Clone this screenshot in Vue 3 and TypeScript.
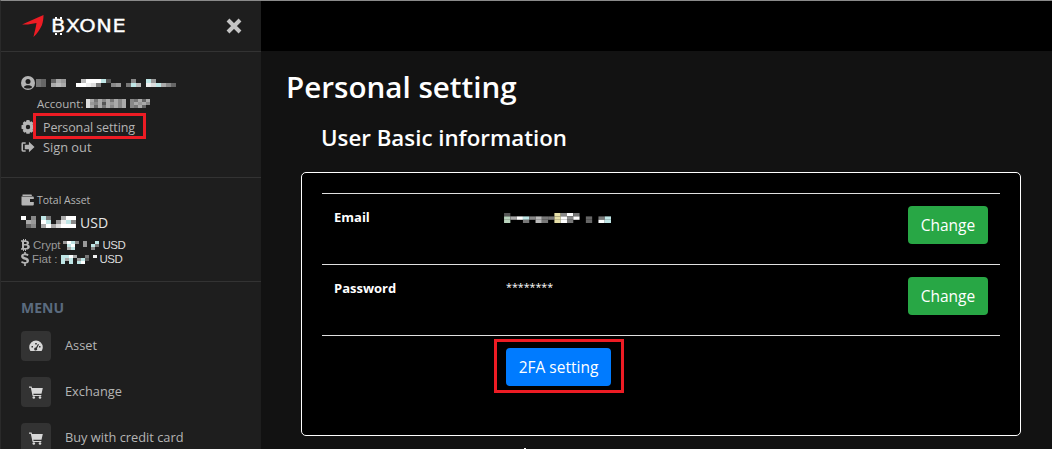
<template>
  <div class="page">
    <aside class="sidebar">
      <div class="brand">
        <svg class="logo" width="24" height="26" viewBox="0 0 24 26">
          <path d="M1 10.500 L22.500 1 C22.500 4 22 8 21 11 C19 15.500 16 20 12.500 23 C13.500 18 15 13 15.500 9 L7 10.500 Z" fill="#ed1c24" />
        </svg>
        <span class="brand-name"><span class="brand-b">B</span>XONE</span>
        <svg class="close" width="16" height="16" viewBox="0 0 16 16">
          <path d="M2 2 L14 14 M14 2 L2 14" stroke="#c4c4c4" stroke-width="4" />
        </svg>
      </div>

      <section class="user">
        <div class="user-line">
          <svg class="ico" width="14" height="14" viewBox="0 0 14 14">
            <circle cx="7" cy="7" r="7" fill="#b5b5b5" />
            <circle cx="7" cy="5.500" r="2.500" fill="#1e1e1e" />
            <path d="M2.800 11.200 C4 8.700 10 8.700 11.200 11.200 C9.500 13 4.500 13 2.800 11.200 Z" fill="#1e1e1e" />
          </svg>
          <svg class="blur" :width="blocks.name.w" :height="blocks.name.h" :viewBox="`0 0 ${blocks.name.w} ${blocks.name.h}`">
            <rect v-for="(b, i) in blocks.name.cells" :key="i" :x="b[0]" :y="b[1]" :width="b[2]" :height="b[3]" :fill="b[4]" />
          </svg>
        </div>
        <div class="account">
          Account:
          <svg class="blur" :width="blocks.account.w" :height="blocks.account.h" :viewBox="`0 0 ${blocks.account.w} ${blocks.account.h}`">
            <rect v-for="(b, i) in blocks.account.cells" :key="i" :x="b[0]" :y="b[1]" :width="b[2]" :height="b[3]" :fill="b[4]" />
          </svg>
        </div>
        <div class="user-link first">
          <svg class="ico" width="14" height="14" viewBox="0 0 14 14">
            <path d="M7 0 L8.600 0.300 L9 2 L10.500 1.300 L12.300 3 L11.600 4.500 L13.500 5.200 L13.500 8.800 L11.600 9.500 L12.300 11 L10.500 12.700 L9 12 L8.600 13.700 L5.400 13.700 L5 12 L3.500 12.700 L1.700 11 L2.400 9.500 L0.500 8.800 L0.500 5.200 L2.400 4.500 L1.700 3 L3.500 1.300 L5 2 L5.400 0.300 Z M7 4.800 A2.200 2.200 0 1 0 7 9.200 A2.200 2.200 0 1 0 7 4.800 Z" fill="#b5b5b5" fill-rule="evenodd" />
          </svg>
          <span class="marked">Personal setting</span>
        </div>
        <div class="user-link">
          <svg class="ico" width="14" height="12" viewBox="0 0 15 12">
            <path d="M5 1 L2 1 Q0.500 1 0.500 2.500 L0.500 9.500 Q0.500 11 2 11 L5 11 L5 9.500 L2.200 9.500 L2.200 2.500 L5 2.500 Z" fill="#b5b5b5" />
            <path d="M8.500 0.500 L14.500 6 L8.500 11.500 L8.500 8.300 L4 8.300 L4 3.700 L8.500 3.700 Z" fill="#b5b5b5" />
          </svg>
          <span>Sign out</span>
        </div>
      </section>

      <section class="assets">
        <div class="asset-title">
          <svg class="ico" width="13" height="12" viewBox="0 0 13 12">
            <path d="M1.500 0.500 L10.500 0.500 L11 2 L1.500 2 Z M0.500 2.500 L12 2.500 Q12.800 2.500 12.800 3.300 L12.800 5 L9 5 L9 8 L12.800 8 L12.800 10.500 Q12.800 11.500 11.800 11.500 L1.500 11.500 Q0.500 11.500 0.500 10.500 Z" fill="#b5b5b5" />
          </svg>
          Total Asset
        </div>
        <div class="asset-total">
          <svg class="blur" :width="blocks.total.w" :height="blocks.total.h" :viewBox="`0 0 ${blocks.total.w} ${blocks.total.h}`">
            <rect v-for="(b, i) in blocks.total.cells" :key="i" :x="b[0]" :y="b[1]" :width="b[2]" :height="b[3]" :fill="b[4]" />
          </svg>
          USD
        </div>
        <div class="asset-line">
          <svg class="cur-ico" width="9" height="12" viewBox="0 0 9 12">
            <path d="M2 0 L3 0 L3 1.300 L4 1.300 L4 0 L5 0 L5 1.400 C7 1.600 8 2.500 8 3.700 C8 4.700 7.500 5.300 6.700 5.600 C8 5.900 8.800 6.800 8.800 8 C8.800 9.600 7.500 10.500 5 10.600 L5 12 L4 12 L4 10.700 L3 10.700 L3 12 L2 12 L2 10.700 L0 10.700 L0 9.300 L1 9.300 L1 2.700 L0 2.700 L0 1.300 L2 1.300 Z M3 3 L3 5 L5 5 C6 5 6 3 5 3 Z M3 6.600 L3 9 L5.300 9 C6.700 9 6.700 6.600 5.300 6.600 Z" fill="#b5b5b5" fill-rule="evenodd" />
          </svg>
          <span class="muted">Crypt</span>
          <svg class="blur" :width="blocks.crypt.w" :height="blocks.crypt.h" :viewBox="`0 0 ${blocks.crypt.w} ${blocks.crypt.h}`">
            <rect v-for="(b, i) in blocks.crypt.cells" :key="i" :x="b[0]" :y="b[1]" :width="b[2]" :height="b[3]" :fill="b[4]" />
          </svg>
          USD
        </div>
        <div class="asset-line">
          <svg class="cur-ico" width="8" height="14" viewBox="0 0 8 14">
            <path d="M3.200 0 L4.800 0 L4.800 1.500 C6 1.600 7 2 7.600 2.500 L6.800 4 C6 3.500 5 3.200 4 3.200 C2.800 3.200 2.400 3.600 2.400 4.100 C2.400 5.600 8 5 8 8.800 C8 10.300 6.800 11.400 4.800 11.600 L4.800 14 L3.200 14 L3.200 11.700 C2 11.600 0.800 11.200 0 10.500 L0.900 9 C1.800 9.700 2.900 10 4 10 C5.100 10 5.600 9.600 5.600 9 C5.600 7.400 0.100 8 0.100 4.300 C0.100 2.800 1.200 1.700 3.200 1.500 Z" fill="#b5b5b5" />
          </svg>
          <span class="muted">Fiat :</span>
          <svg class="blur" :width="blocks.fiat.w" :height="blocks.fiat.h" :viewBox="`0 0 ${blocks.fiat.w} ${blocks.fiat.h}`">
            <rect v-for="(b, i) in blocks.fiat.cells" :key="i" :x="b[0]" :y="b[1]" :width="b[2]" :height="b[3]" :fill="b[4]" />
          </svg>
          USD
        </div>
      </section>

      <section class="menu">
        <h4>MENU</h4>
        <div v-for="item in menu" :key="item.label" class="menu-item">
          <span class="menu-icon">
            <svg v-if="item.icon === 'gauge'" width="14" height="12" viewBox="0 0 14 12">
              <path d="M7 0.500 A6.800 6.800 0 0 0 0.200 7.300 Q0.200 9.500 1.400 11 L12.600 11 Q13.800 9.500 13.800 7.300 A6.800 6.800 0 0 0 7 0.500 Z M6.200 3 L7.800 3 L7.800 4.500 L6.200 4.500 Z M2.500 6 L4 6 L4 7.500 L2.500 7.500 Z M10 6 L11.500 6 L11.500 7.500 L10 7.500 Z M9 4 L10 4.600 L8 8.300 A1.500 1.500 0 1 1 7 7.500 Z" fill="#d8d8d8" fill-rule="evenodd" />
            </svg>
            <svg v-else width="14" height="13" viewBox="0 0 14 13">
              <path d="M0 0.500 L2.600 0.500 L3 2 L13.800 2 L12.500 7.800 L4.300 7.800 L4.600 9 L12.300 9 L12.300 10 L3.600 10 L1.800 1.700 L0 1.700 Z" fill="#d8d8d8" />
              <circle cx="4.800" cy="11.500" r="1.300" fill="#d8d8d8" />
              <circle cx="11" cy="11.500" r="1.300" fill="#d8d8d8" />
            </svg>
          </span>
          <span class="menu-label">{{ item.label }}</span>
        </div>
      </section>
    </aside>

    <div class="right">
      <div class="topbar"></div>
      <main class="content">
        <h1>Personal setting</h1>
        <div class="panel">
          <h2>User Basic information</h2>
          <div class="card">
            <div v-for="row in rows" :key="row.label" class="row">
              <div class="row-label">{{ row.label }}</div>
              <div class="row-value">
                <svg v-if="row.masked" class="blur email" :width="blocks.email.w" :height="blocks.email.h" :viewBox="`0 0 ${blocks.email.w} ${blocks.email.h}`">
                  <rect v-for="(b, i) in blocks.email.cells" :key="i" :x="b[0]" :y="b[1]" :width="b[2]" :height="b[3]" :fill="b[4]" />
                </svg>
                <template v-else>{{ row.value }}</template>
              </div>
              <button class="btn green">Change</button>
            </div>
            <div class="row last">
              <div class="row-label"></div>
              <div class="marked-btn"><button class="btn blue">2FA setting</button></div>
            </div>
          </div>
          <div class="next-dot"></div>
        </div>
      </main>
    </div>
  </div>
</template>

<script setup lang="ts">
type Cell = [number, number, number, number, string]

const tints: Record<string, string> = { g: '#b9d3bd', y: '#e6dfa8', c: '#bfe6e6' }

// mosaic blocks that hide the private values in the screenshot
const mosaic = (rows: string[], cw: number, ch: number) => {
  const cells: Cell[] = []
  rows.forEach((row, y) => {
    row.split('').forEach((c, x) => {
      if (c === '.') return
      const v = parseInt(c, 16) * 17
      cells.push([x * cw, y * ch, cw, ch, tints[c] ?? `rgb(${v},${v},${v})`])
    })
  })
  return { w: rows[0].length * cw, h: rows.length * ch, cells }
}

const blocks = {
  name: mosaic([
    '76.6a9...bfffc5....8..c9....',
    '76.aba..ffed7..89.7cb.edca86',
  ], 5, 4),
  account: mosaic([
    'da7a8a7a8a.87a6a',
    'd98a5a9a8a.8a9a8',
    'da6a7a8a8a.87a6.',
  ], 4, 3),
  total: mosaic([
    'f.8.c7..aff',
    '.a9.fc.9ec8',
    '.68.afadfff',
  ], 5, 4),
  crypt: mosaic([
    '9fc8.9..c',
    '.cf..9.c7',
    '.ac....8.',
  ], 4, 3),
  fiat: mosaic([
    'ccfa..7.e',
    'cac.9c5..',
    'c.c.cf...',
  ], 4, 3),
  email: mosaic([
    '5.......y8f7.....',
    'gafc8b77yf8f.6.7c',
    'g..7.b7.yf7..6.fc',
  ], 6.300, 3.400),
}

const menu = [
  { label: 'Asset', icon: 'gauge' },
  { label: 'Exchange', icon: 'cart' },
  { label: 'Buy with credit card', icon: 'cart' },
]

const rows = [
  { label: 'Email', value: '', masked: true },
  { label: 'Password', value: '********', masked: false },
]
</script>

<style>
html,
body {
  margin: 0;
  background: #121212;
  overflow: hidden;
}
</style>

<style scoped>
.page {
  display: flex;
  width: 1052px;
  height: 449px;
  overflow: hidden;
  font-family: "Open Sans", "Noto Sans", sans-serif;
  color: #fff;
}
.sidebar {
  width: 261px;
  flex: none;
  background: #1e1e1e;
  color: #b5b5b5;
  font-size: 12.800px;
  border-left: 1px solid #2a2a2a;
  border-top: 1px solid #8a8a8a;
  box-sizing: border-box;
}
.brand {
  display: flex;
  align-items: center;
  height: 50px;
  padding: 0 19px 0 20px;
  border-bottom: 1px solid #333;
}
.logo {
  flex: none;
  margin: 2px 6px 0 0;
}
.brand-name {
  flex: 1;
  font-family: "DejaVu Sans", sans-serif;
  font-size: 17px;
  letter-spacing: 0.4px;
  color: #fff;
  -webkit-text-stroke: 0.3px #fff;
  transform: scaleX(1.230);
  transform-origin: left center;
}
.brand-b {
  position: relative;
}
.brand-b::before,
.brand-b::after {
  content: "";
  position: absolute;
  left: 3px;
  width: 6px;
  height: 2px;
  background: repeating-linear-gradient(90deg, #fff 0 2px, transparent 2px 4px);
}
.brand-b::before {
  top: 1px;
}
.brand-b::after {
  bottom: 1px;
}
.close {
  flex: none;
}
.user {
  padding: 24px 20px 20px;
  border-bottom: 1px solid #333;
}
.user-line {
  display: flex;
  align-items: center;
  gap: 1px;
  height: 14px;
}
.account {
  display: flex;
  align-items: center;
  gap: 3px;
  height: 16px;
  margin: 5px 0 0 16px;
  font-size: 11.500px;
}
.user-link {
  display: flex;
  align-items: center;
  gap: 8px;
  height: 20px;
}
.user-link.first {
  margin-top: 6px;
  font-size: 12.500px;
  letter-spacing: -0.100px;
}
.marked {
  position: relative;
}
.marked::after {
  content: "";
  position: absolute;
  inset: -6px -11px -3px -10px;
  border: 3px solid #ed1c24;
}
.assets {
  padding: 14px 20px 15px;
  border-bottom: 1px solid #333;
}
.asset-title {
  display: flex;
  align-items: center;
  gap: 3px;
  height: 16px;
  font-size: 10.500px;
}
.asset-total {
  display: flex;
  align-items: center;
  gap: 4px;
  height: 22px;
  margin-top: 3px;
  font-size: 14px;
  color: #e6e6e6;
}
.asset-line {
  display: flex;
  align-items: center;
  gap: 3px;
  height: 14px;
  font-family: "Liberation Sans", sans-serif;
  font-size: 11.500px;
  line-height: 14px;
  letter-spacing: -0.500px;
  color: #dcdcdc;
}
.asset-total + .asset-line {
  margin-top: 5px;
}
.cur-ico {
  flex: none;
}
.muted {
  color: #9a9a9a;
  letter-spacing: 0;
}
.menu {
  padding: 17px 20px;
}
.menu h4 {
  margin: 0 0 14px;
  font-size: 14px;
  line-height: 18px;
  font-weight: 700;
  color: #5b6b7f;
}
.menu-item {
  display: flex;
  align-items: center;
  gap: 14px;
  height: 30px;
  margin-bottom: 16px;
}
.menu-label {
  padding-bottom: 2px;
}
.menu-icon {
  display: flex;
  align-items: center;
  justify-content: center;
  width: 30px;
  height: 30px;
  border-radius: 4px;
  background: #333;
}
.right {
  flex: 1;
  min-width: 0;
  display: flex;
  flex-direction: column;
}
.topbar {
  height: 51px;
  flex: none;
  box-sizing: border-box;
  background: #000;
  border-top: 1px solid #8a8a8a;
}
.content {
  padding: 16px 31px 0 25px;
  background: #121212;
  flex: 1;
}
h1 {
  margin: 0;
  font-size: 29.600px;
  line-height: 40px;
  font-weight: 600;
}
.panel {
  padding-left: 15px;
}
h2 {
  margin: 16px 0 19px 20px;
  font-size: 22.300px;
  line-height: 30px;
  font-weight: 600;
}
.card {
  box-sizing: border-box;
  height: 264px;
  padding: 20px 20px 0;
  background: #000;
  border: 1px solid #fff;
  border-radius: 5px;
}
.row {
  display: flex;
  align-items: flex-start;
  height: 70px;
  border-top: 1px solid #e0e0e0;
}
.row-label {
  width: 184px;
  flex: none;
  padding: 14px 0 0 12px;
  box-sizing: border-box;
  font-size: 13px;
  line-height: 18px;
  font-weight: 700;
  color: #fff;
}
.row-value {
  flex: 1;
  padding-top: 13px;
  font-size: 10.700px;
  line-height: 18px;
  color: #fff;
}
.blur.email {
  display: block;
  margin: 6px 0 0 -2px;
}
.btn {
  height: 38px;
  margin-top: 12px;
  border: 0;
  border-radius: 4px;
  font-family: inherit;
  font-size: 15.500px;
  color: #fff;
}
.green {
  width: 80px;
  margin-right: 12px;
  background: #28a745;
}
.blue {
  width: 105px;
  background: #007bff;
}
.marked-btn {
  position: relative;
  height: 38px;
}
.marked-btn::after {
  content: "";
  position: absolute;
  inset: 3px -13px -19px -12px;
  border: 3px solid #ed1c24;
}
.next-dot {
  width: 2px;
  height: 2px;
  margin: 12px 0 0 223px;
  background: #fff;
}
</style>
